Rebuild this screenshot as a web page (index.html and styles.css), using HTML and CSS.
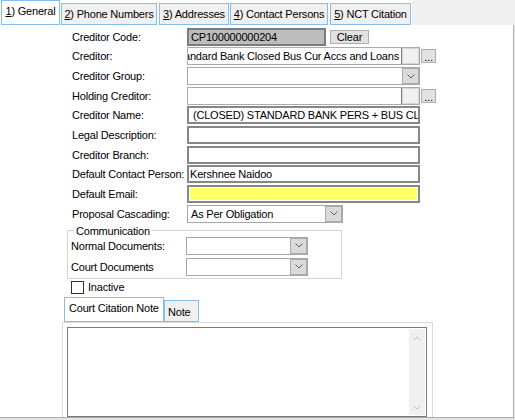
FILE: index.html
```html
<!DOCTYPE html>
<html>
<head>
<meta charset="utf-8">
<link rel="stylesheet" href="styles.css">
</head>
<body>
<div class="window">
  <div class="tabstrip">
    <div class="tab active t1"><span><u>1</u>) General</span></div>
    <div class="tab t2"><span><u>2</u>) Phone Numbers</span></div>
    <div class="tab t3"><span><u>3</u>) Addresses</span></div>
    <div class="tab t4"><span><u>4</u>) Contact Persons</span></div>
    <div class="tab t5"><span><u>5</u>) NCT Citation</span></div>
    <div class="tabfill"></div>
  </div>
  <div class="page">
    <div class="row">
      <div class="lbl">Creditor Code:</div>
      <div class="code">CP100000000204</div>
      <button class="btn clear">Clear</button>
    </div>
    <div class="row">
      <div class="lbl">Creditor:</div>
      <div class="lookup">
        <div class="txt"><span>Standard Bank Closed Bus Cur Accs and Loans</span></div>
        <div class="sq"></div>
      </div>
      <button class="btn dots">...</button>
    </div>
    <div class="row">
      <div class="lbl">Creditor Group:</div>
      <div class="combo w-full">
        <div class="val"></div>
        <div class="dd"><svg width="8" height="5" viewBox="0 0 8 5"><polyline points="0.5,0.5 4,4 7.5,0.5" fill="none" stroke="#5f5f5f" stroke-width="1"/></svg></div>
      </div>
    </div>
    <div class="row">
      <div class="lbl">Holding Creditor:</div>
      <div class="lookup">
        <div class="txt"></div>
        <div class="sq"></div>
      </div>
      <button class="btn dots">...</button>
    </div>
    <div class="row">
      <div class="lbl">Creditor Name:</div>
      <div class="tb name">(CLOSED) STANDARD BANK PERS + BUS CLOSED</div>
    </div>
    <div class="row">
      <div class="lbl">Legal Description:</div>
      <div class="tb"></div>
    </div>
    <div class="row">
      <div class="lbl">Creditor Branch:</div>
      <div class="tb"></div>
    </div>
    <div class="row">
      <div class="lbl">Default Contact Person:</div>
      <div class="tb">Kershnee Naidoo</div>
    </div>
    <div class="row">
      <div class="lbl">Default Email:</div>
      <div class="tb email"></div>
    </div>
    <div class="row">
      <div class="lbl">Proposal Cascading:</div>
      <div class="combo w-prop">
        <div class="val">As Per Obligation</div>
        <div class="dd"><svg width="8" height="5" viewBox="0 0 8 5"><polyline points="0.5,0.5 4,4 7.5,0.5" fill="none" stroke="#5f5f5f" stroke-width="1"/></svg></div>
      </div>
    </div>

    <fieldset class="grp">
      <legend>Communication</legend>
      <div class="grow">
        <div class="lbl">Normal Documents:</div>
        <div class="combo w-doc">
          <div class="val"></div>
          <div class="dd"><svg width="8" height="5" viewBox="0 0 8 5"><polyline points="0.5,0.5 4,4 7.5,0.5" fill="none" stroke="#5f5f5f" stroke-width="1"/></svg></div>
        </div>
      </div>
      <div class="grow">
        <div class="lbl">Court Documents</div>
        <div class="combo w-doc">
          <div class="val"></div>
          <div class="dd"><svg width="8" height="5" viewBox="0 0 8 5"><polyline points="0.5,0.5 4,4 7.5,0.5" fill="none" stroke="#5f5f5f" stroke-width="1"/></svg></div>
        </div>
      </div>
    </fieldset>

    <div class="chkrow">
      <span class="chk"></span>
      <span class="chklbl">Inactive</span>
    </div>

    <div class="subtabs">
      <div class="stab active">Court Citation Note</div>
      <div class="stab note">Note</div>
    </div>
    <div class="subpanel">
      <div class="memo">
        <div class="sb">
          <svg width="8" height="5" viewBox="0 0 8 5"><polyline points="0.5,4.5 4,1 7.5,4.5" fill="none" stroke="#c2c2c2" stroke-width="1"/></svg>
          <svg width="8" height="5" viewBox="0 0 8 5"><polyline points="0.5,0.5 4,4 7.5,0.5" fill="none" stroke="#c2c2c2" stroke-width="1"/></svg>
        </div>
      </div>
    </div>
  </div>
</div>
</body>
</html>
```

FILE: styles.css
```css
* { box-sizing: border-box; }
html, body { margin: 0; padding: 0; }
body {
  width: 515px;
  height: 420px;
  overflow: hidden;
  background: #e3e3e3;
  font-family: "Liberation Sans", Arial, sans-serif;
  font-size: 11px;
  letter-spacing: -0.2px;
  color: #000;
}
.window {
  width: 515px;
  height: 420px;
  display: flex;
  flex-direction: column;
  background: #e3e3e3;
}

/* top tabs */
.tabstrip {
  flex: none;
  display: flex;
  height: 25px;
  background: #fff;
}
.tab {
  height: 22px;
  margin-top: 3px;
  border: 1px solid #84bdee;
  background: #f0f0f0;
  display: flex;
  align-items: center;
  justify-content: center;
  white-space: nowrap;
  line-height: 12px;
}
.tab.active {
  height: 25px;
  margin-top: 0;
  background: #fff;
  padding-bottom: 3px;
}
.t1 { margin-left: 1px; width: 59px; }
.t2 { margin-left: 1px; width: 96px; }
.t3 { margin-left: 2px; width: 70px; }
.t4 { margin-left: 1px; width: 98px; }
.t5 { margin-left: 2px; width: 81px; }
.tabfill {
  flex: 1;
  margin-left: 1px;
  background: #f0f0f0;
}

/* page */
.page {
  flex: none;
  width: 514px;
  height: 393px;
  background: #fff;
  border-right: 1px solid #b4b4b4;
  border-bottom: 1px solid #a9a9a9;
  padding-top: 2px;
  overflow: hidden;
}
.row {
  display: flex;
  align-items: center;
  height: 19.67px;
  padding-left: 72px;
}
.lbl {
  flex: none;
  width: 115px;
  white-space: nowrap;
}

.code {
  width: 139px;
  height: 18px;
  border: 2px solid #7c7c7c;
  background: #bdbdbd;
  padding-left: 2px;
  line-height: 14px;
  white-space: nowrap;
}
.btn {
  font: inherit;
  letter-spacing: inherit;
  color: #000;
  height: 14px;
  padding: 0;
  background: #e1e1e1;
  border: 1px solid #adadad;
  line-height: 12px;
  text-align: center;
}
.clear {
  width: 39px;
  margin-left: 4px;
}
.dots {
  width: 15px;
  margin-left: 1px;
  line-height: 14px;
}

.lookup {
  width: 233px;
  height: 18px;
  border: 1px solid #ababab;
  display: flex;
  background: #fff;
}
.lookup .txt {
  flex: 1;
  min-width: 0;
  border-right: 1px solid #7a7a7a;
  overflow: hidden;
  display: flex;
  justify-content: flex-end;
  white-space: nowrap;
  line-height: 16px;
  padding-right: 2px;
}
.lookup .txt span { flex: none; }
.lookup .sq {
  flex: none;
  width: 17px;
  background: #f0f0f0;
  border: 1px solid #d4d4d4;
}

.combo {
  height: 18px;
  border: 1px solid #a7a7a7;
  display: flex;
  background: #fff;
}
.combo .val {
  flex: 1;
  padding-left: 3px;
  line-height: 16px;
  white-space: nowrap;
  overflow: hidden;
}
.combo .dd {
  flex: none;
  width: 17px;
  background: #dadada;
  box-shadow: inset 0 0 0 1px #ababab;
  display: flex;
  align-items: center;
  justify-content: center;
}
.combo .dd svg { display: block; }
.w-full { width: 233px; }
.w-prop { width: 156px; }
.w-doc { width: 122px; }

.tb {
  width: 233px;
  height: 18px;
  border: 2px solid #878787;
  padding-left: 1px;
  line-height: 14px;
  white-space: nowrap;
  overflow: hidden;
  background: #fff;
}
.tb.name { padding-left: 4px; }
.tb.email {
  background: #ffff66;
  box-shadow: inset 0 0 0 1px #fff;
}

/* group box */
.grp {
  margin: 1px 0 0 67px;
  width: 275px;
  min-width: 0;
  border: 1px solid #d5d5d5;
  padding: 0 0 2px 0;
}
.grp legend {
  margin-left: 6px;
  padding: 0 2px;
  line-height: 12px;
  height: 12px;
}
.grow {
  display: flex;
  align-items: center;
  height: 18px;
  padding-left: 3px;
}
.grow + .grow { margin-top: 3px; }

/* checkbox */
.chkrow {
  display: flex;
  align-items: center;
  height: 13px;
  margin: 2px 0 0 71px;
}
.chk {
  width: 13px;
  height: 13px;
  border: 1px solid #333;
  background: #fff;
}
.chklbl { margin-left: 4px; }

/* sub tabs */
.subtabs {
  display: flex;
  align-items: flex-end;
  height: 25px;
  margin: 3px 0 0 64px;
}
.stab {
  border: 1px solid #84bdee;
  display: flex;
  align-items: center;
  white-space: nowrap;
  line-height: 12px;
}
.stab.active {
  width: 100px;
  height: 25px;
  background: #fff;
  padding: 0 0 3px 4px;
}
.stab.note {
  width: 35px;
  height: 22px;
  background: #f0f0f0;
  padding: 2px 0 0 3px;
}
.subpanel {
  margin-left: 62px;
  width: 371px;
  height: 100px;
  border: 1px solid #d9d9d9;
  padding: 4px 0 0 4px;
}
.memo {
  width: 360px;
  height: 90px;
  border: 1px solid #7a7a7a;
  background: #fff;
  display: flex;
  justify-content: flex-end;
  padding: 1px;
}
.sb {
  width: 16px;
  background: #f0f0f0;
  display: flex;
  flex-direction: column;
  justify-content: space-between;
  align-items: center;
  padding: 7px 0 5px;
}
.sb svg { display: block; }
```
